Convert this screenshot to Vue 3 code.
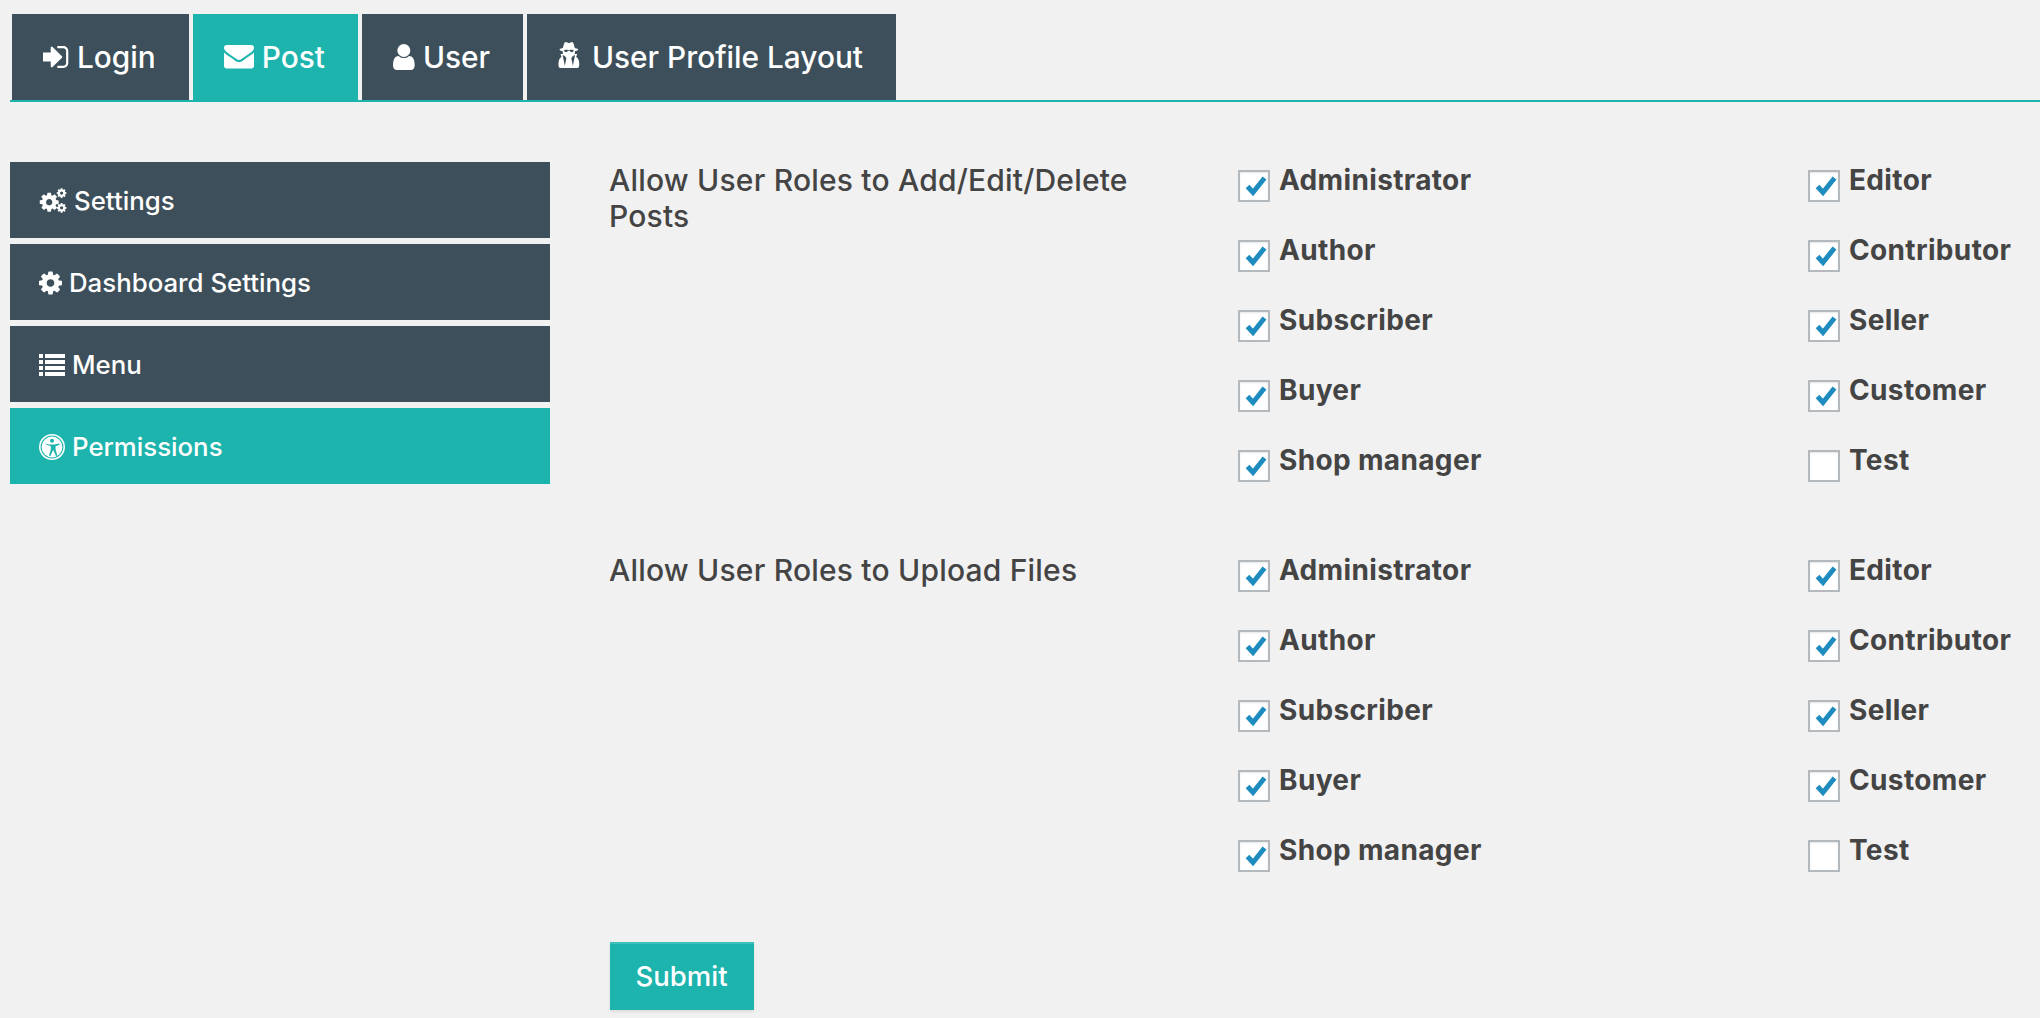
<script setup>
const cog =
  "M1152 896q0-106-75-181t-181-75-181 75-75 181 75 181 181 75 181-75 75-181zm512-109v222q0 12-8 23t-20 13l-185 28q-19 54-39 91 35 50 107 138 10 12 10 25t-9 23q-27 37-99 108t-94 71q-12 0-26-9l-138-108q-44 23-91 38-16 136-29 186-7 28-36 28h-222q-14 0-24.5-8.5t-11.5-21.5l-28-184q-49-16-90-37l-141 107q-10 9-25 9-14 0-25-11-126-114-165-168-7-10-7-23 0-12 8-23 15-21 51-66.5t54-70.5q-27-50-41-99l-183-27q-13-2-21-12.5t-8-23.5v-222q0-12 8-23t19-13l186-28q14-46 39-92-40-57-107-138-10-12-10-24 0-10 9-23 26-36 98.5-107.5t94.5-71.5q13 0 26 10l138 107q44-23 91-38 16-136 29-186 7-28 36-28h222q14 0 24.5 8.5t11.5 21.5l28 184q49 16 90 37l142-107q9-9 24-9 13 0 25 10 129 119 165 170 7 8 7 22 0 12-8 23-15 21-51 66.5t-54 70.5q26 50 41 98l183 28q13 2 21 12.5t8 23.5z";

const tabs = [
  {
    name: "Login",
    w: 26,
    h: 22,
    box: "64 256 1472 1280",
    d: "M1184 896q0 26-19 45l-544 544q-19 19-45 19t-45-19-19-45v-288h-448q-26 0-45-19t-19-45v-384q0-26 19-45t45-19h448v-288q0-26 19-45t45-19 45 19l544 544q19 19 19 45zm352-352v704q0 119-84.5 203.5t-203.5 84.5h-320q-13 0-22.5-9.5t-9.5-22.5q0-4-1-20t-.5-26.5 3-23.5 10-19.5 20.5-6.5h320q66 0 113-47t47-113v-704q0-66-47-113t-113-47h-312l-11.5-1-11.5-3-8-5.5-7-9-2-13.5q0-4-1-20t-.5-26.5 3-23.5 10-19.5 20.5-6.5h320q119 0 203.5 84.5t84.5 203.5z",
  },
  {
    name: "Post",
    w: 30,
    h: 24,
    box: "0 256 1792 1408",
    active: true,
    d: "M1792 710v794q0 66-47 113t-113 47h-1472q-66 0-113-47t-47-113v-794q44 49 101 87 362 246 497 345 57 42 92.5 65.5t94.5 48 110 24.5h2q51 0 110-24.5t94.5-48 92.5-65.5q170-123 498-345 57-39 100-87zm0-294q0 79-49 151t-122 123q-376 261-468 325-10 7-42.5 30.5t-54 38-52 32.5-57.5 27-50 9h-2q-23 0-50-9t-57.5-27-52-32.5-54-38-42.5-30.5q-91-64-262-182.5t-205-142.5q-62-42-117-115.5t-55-136.5q0-78 41.5-130t118.5-52h1472q65 0 112.5 47t47.5 113z",
  },
  {
    name: "User",
    w: 22,
    h: 26,
    box: "256 128 1280 1536",
    d: "M1536 1399q0 109-62.5 187t-150.5 78h-854q-88 0-150.5-78t-62.5-187q0-85 8.5-160.5t31.5-152 58.5-131 94-89 134.5-34.5q131 128 313 128t313-128q76 0 134.5 34.5t94 89 58.5 131 31.5 152 8.5 160.5zm-256-887q0 159-112.5 271.5t-271.5 112.5-271.5-112.5-112.5-271.5 112.5-271.5 271.5-112.5 271.5 112.5 112.5 271.5z",
  },
  {
    name: "User Profile Layout",
    w: 26,
    h: 30,
    box: "256 128 1536 1772",
    // silhouette, then glasses and the two coat stripes cut out
    d: "M540 480l70-240q30-112 100-112q30 0 100 30t86 30 86-30 100-30q70 0 100 112l70 240q200 36 200 96q0 56-194 96q8 80-20 160h150l-60 176q180 100 180 420v106q0 130-130 130h-964q-130 0-130-130v-106q0-320 180-420l-60-176h150q-28-80-20-160q-194-40-194-96q0-60 200-96zM610 600q70-20 180-10q60 6 106 6t106-6q110-10 180 10q-10 130-120 130q-90 0-110-80h-112q-20 80-110 80q-110 0-120-130zM657 1536l96-448-96-128-128-64zM1135 1536l-96-448 96-128 128-64z",
  },
];

const menu = [
  { name: "Settings", icon: "cogs" },
  { name: "Dashboard Settings", icon: "cog" },
  { name: "Menu", icon: "list" },
  { name: "Permissions", icon: "access", active: true },
];

const roles = [
  ["Administrator", true],
  ["Editor", true],
  ["Author", true],
  ["Contributor", true],
  ["Subscriber", true],
  ["Seller", true],
  ["Buyer", true],
  ["Customer", true],
  ["Shop manager", true],
  ["Test", false],
];

const sections = [
  { title: "Allow User Roles to Add/Edit/Delete Posts" },
  { title: "Allow User Roles to Upload Files" },
];
</script>

<template>
  <div class="page">
    <nav class="tabs">
      <a v-for="t in tabs" :key="t.name" class="tab" :class="{ active: t.active }">
        <svg :viewBox="t.box" :width="t.w" :height="t.h" preserveAspectRatio="xMinYMin meet">
          <path :d="t.d" fill="#fff" fill-rule="evenodd" />
        </svg>
        {{ t.name }}
      </a>
    </nav>

    <div class="content">
      <aside class="side">
        <a v-for="m in menu" :key="m.name" class="side-item" :class="{ active: m.active }">
          <svg v-if="m.icon === 'cogs'" width="28" height="26" viewBox="0 0 2048 1900">
            <path :d="cog" fill="#fff" transform="translate(-60 230) scale(.9)" />
            <path :d="cog" fill="#fff" transform="translate(1240 -40) scale(.46)" />
            <path :d="cog" fill="#fff" transform="translate(1240 1040) scale(.46)" />
          </svg>
          <svg v-else-if="m.icon === 'cog'" width="23" height="24" viewBox="128 128 1536 1536">
            <path :d="cog" fill="#fff" />
          </svg>
          <svg v-else-if="m.icon === 'list'" width="26" height="22" viewBox="0 0 26 22">
            <g fill="#fff">
              <rect x="0" y="0" width="4" height="4" />
              <rect x="0" y="6" width="4" height="4" />
              <rect x="0" y="12" width="4" height="4" />
              <rect x="0" y="18" width="4" height="4" />
              <rect x="6" y="0" width="20" height="4" />
              <rect x="6" y="6" width="20" height="4" />
              <rect x="6" y="12" width="20" height="4" />
              <rect x="6" y="18" width="20" height="4" />
            </g>
          </svg>
          <svg v-else width="26" height="26" viewBox="0 0 26 26">
            <circle cx="13" cy="13" r="12.2" fill="none" stroke="#fff" stroke-width="1.5" />
            <circle cx="13" cy="13" r="10.4" fill="#fff" />
            <g fill="#1db4ad">
              <circle cx="13" cy="6.8" r="2" />
              <path d="M5.8 9.4l4.6 1.2h5.2l4.6-1.2.4 1.4-4 1.5v3.2l1.8 6-1.5.5-2.3-5.4h-.8l-2.3 5.4-1.5-.5 1.8-6v-3.2l-4-1.5z" />
            </g>
          </svg>
          {{ m.name }}
        </a>
      </aside>

      <main class="main">
        <section v-for="s in sections" :key="s.title" class="section">
          <h3 class="title">{{ s.title }}</h3>
          <div class="roles">
            <label v-for="r in roles" :key="r[0]" class="role">
              <span class="box">
                <svg v-if="r[1]" width="28" height="28" viewBox="0 0 28 28">
                  <path d="M7.5 14.5L13 20.5 24.5 6" fill="none" stroke="#1e8cbe" stroke-width="5" />
                </svg>
              </span>
              <span class="role-name">{{ r[0] }}</span>
            </label>
          </div>
        </section>
        <button class="submit">Submit</button>
      </main>
    </div>
  </div>
</template>

<style>
html,
body {
  background: #f1f1f1;
  overflow: hidden;
}
</style>

<style scoped>
.page {
  height: 1018px;
  padding-top: 14px;
  box-sizing: border-box;
  font-family: Inter, "Liberation Sans", sans-serif;
  color: #444;
}
.tabs {
  display: flex;
  gap: 4px;
  margin-left: 10px;
  padding-left: 2px;
  border-bottom: 2px solid #1db4ad;
}
.tab {
  display: flex;
  align-items: center;
  gap: 8px;
  height: 86px;
  padding: 0 33px 0 31px;
  background: #3d4f5a;
  color: #fff;
  font-size: 29.8px;
  font-weight: 500;
}
.tab.active {
  background: #1db4ad;
}
.content {
  display: flex;
  margin-top: 60px;
}
.side {
  display: flex;
  flex-direction: column;
  gap: 6px;
  width: 540px;
  margin-left: 10px;
}
.side-item {
  display: flex;
  align-items: center;
  gap: 7px;
  height: 76px;
  box-sizing: border-box;
  padding: 1px 0 0 29px;
  background: #3d4f5a;
  color: #fff;
  font-size: 25.8px;
  font-weight: 500;
}
.side-item.active {
  background: #1db4ad;
}
.main {
  margin-left: 59px;
}
.section {
  display: grid;
  grid-template-columns: 629px auto;
  margin-bottom: 70px;
}
.title {
  width: 560px;
  margin: 0;
  font-size: 30px;
  font-weight: 500;
  letter-spacing: 0.2px;
  line-height: 36px;
}
.roles {
  display: grid;
  grid-template-columns: 570px 232px;
  row-gap: 38px;
  padding-top: 8px;
}
.role {
  display: flex;
  gap: 9px;
}
.box {
  box-sizing: border-box;
  width: 32px;
  height: 32px;
  flex: none;
  background: #fff;
  border: 2px solid #b4b9be;
  box-shadow: inset 0 1px 2px rgba(0, 0, 0, 0.1);
}
.box svg {
  display: block;
}
.role-name {
  font-size: 28px;
  font-weight: 700;
  letter-spacing: 0.35px;
  line-height: 20px;
}
.submit {
  display: block;
  width: 144px;
  height: 68px;
  margin-left: 1px;
  padding: 0 1px 2px 0;
  background: #1db4ad;
  border: 0;
  border-top: 2px solid #3dc0b9;
  box-shadow: 0 2px 3px rgba(0, 0, 0, 0.08);
  color: #fff;
  font-family: inherit;
  font-size: 27.5px;
  font-weight: 500;
}
</style>
